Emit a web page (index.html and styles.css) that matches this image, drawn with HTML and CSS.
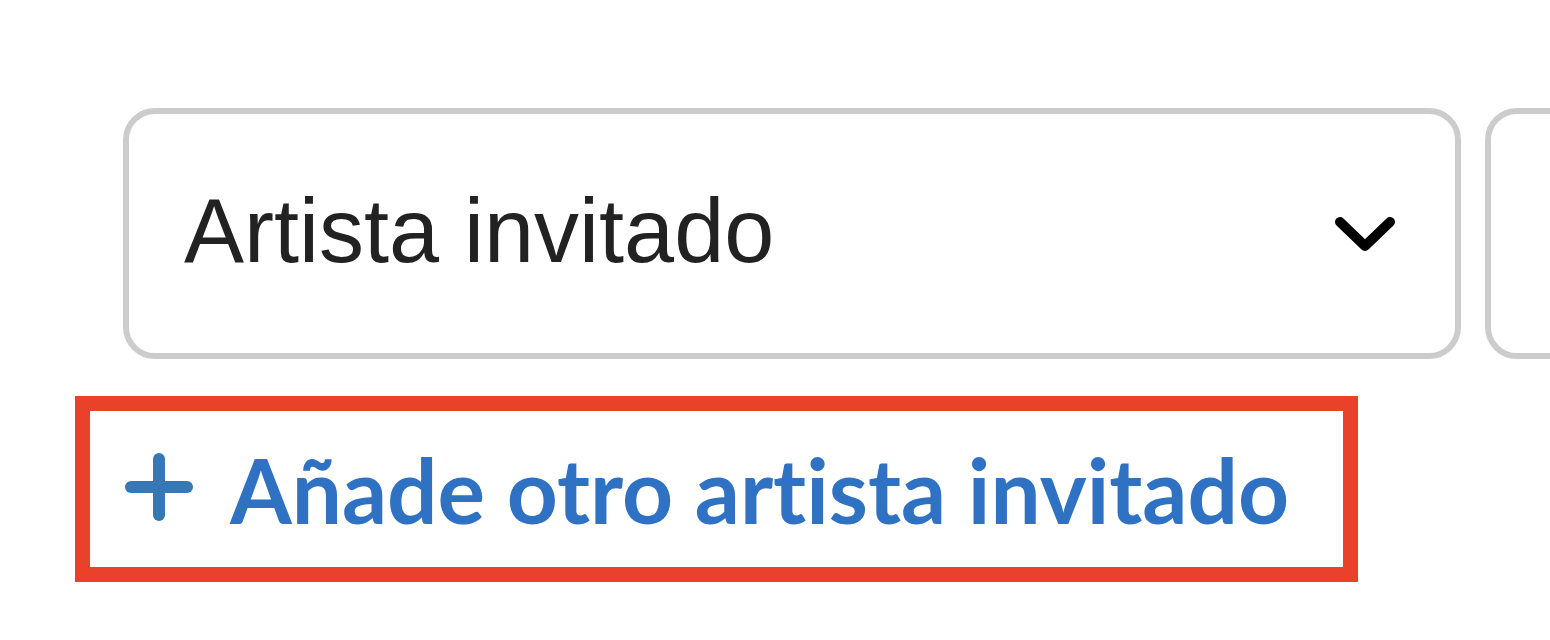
FILE: index.html
```html
<!DOCTYPE html>
<html lang="es">
<head>
    <meta charset="UTF-8">
    <meta name="viewport" content="width=device-width, initial-scale=1.0">
    <title>Artistas invitados</title>
    <link rel="stylesheet" href="styles.css">
</head>

<body>
    <div class="guests">
        <div class="guest-row">
            <div class="select">
                <span class="select-value">Artista invitado</span>
                <svg class="chevron" width="60" height="34" viewBox="0 0 60 34">
                    <polyline points="5,5 30,29 55,5" />
                </svg>
            </div>
            <div class="select select-next"></div>
        </div>

        <button class="add-guest">
            <svg class="plus" width="68" height="68" viewBox="0 0 68 68">
                <line x1="34" y1="6" x2="34" y2="62" />
                <line x1="6" y1="34" x2="62" y2="34" />
            </svg>
            Añade otro artista invitado
        </button>
    </div>
</body>
</html>
```

FILE: styles.css
```css
body {
    margin: 0;
    background-color: white;
    overflow: hidden;
}
.guests {
    padding: 108px 0 0 75px;
}
.guest-row {
    display: flex;
    gap: 24px;
    margin-left: 48px;
}
.select {
    flex: 0 0 1338px;
    box-sizing: border-box;
    height: 251px;
    border: 6px solid #cccccc;
    border-radius: 32px;
    padding: 0 60px 0 55px;
    display: flex;
    align-items: center;
    justify-content: space-between;
    font-family: 'Liberation Sans', Arial, sans-serif;
    font-size: 90px;
    color: #222222;
}
.select-value {
    margin-top: -4px;
}
.chevron polyline {
    fill: none;
    stroke: #000000;
    stroke-width: 10;
    stroke-linecap: round;
    stroke-linejoin: round;
}
.add-guest {
    margin-top: 37px;
    display: inline-flex;
    align-items: center;
    gap: 37px;
    box-sizing: border-box;
    height: 186px;
    padding: 0 54px 0 35px;
    border: 15px solid #e9412a;
    background: white;
    font-family: Lato, 'Open Sans', sans-serif;
    font-weight: 700;
    font-size: 89px;
    font-variant-ligatures: none;
    color: #2f72c4;
    cursor: pointer;
}
.add-guest span,
.add-guest {
    line-height: 1;
}
.plus {
    margin-top: -4px;
}
.plus line {
    stroke: #3678b5;
    stroke-width: 12;
    stroke-linecap: round;
}
```
